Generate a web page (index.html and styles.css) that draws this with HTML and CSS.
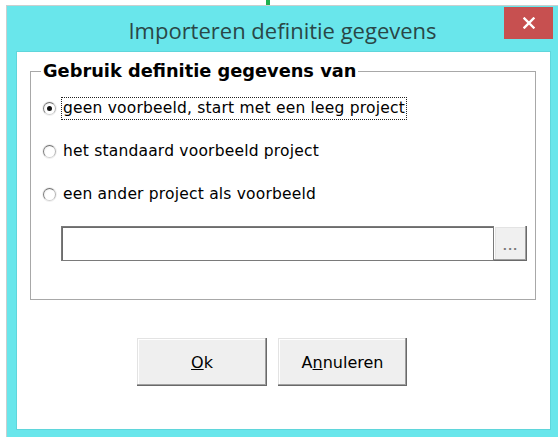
FILE: index.html
```html
<!DOCTYPE html>
<html lang="nl">
<head>
<meta charset="utf-8">
<title>Importeren definitie gegevens</title>
<link rel="stylesheet" href="styles.css">
</head>
<body>
<div class="desk"><span class="desk-mark"></span></div>
<div class="window">
  <div class="titlebar">
    <span class="title-spacer"></span>
    <h1 class="title">Importeren definitie gegevens</h1>
    <button class="close" type="button" aria-label="Sluiten">
      <svg width="12" height="12" viewBox="0 0 12 12"><path d="M1.5 1.5 L10.5 10.5 M10.5 1.5 L1.5 10.5" stroke="#fff" stroke-width="2.4" stroke-linecap="square" fill="none"/></svg>
    </button>
  </div>
  <div class="client">
    <fieldset class="group">
      <legend class="group-title">Gebruik definitie gegevens van</legend>
      <label class="option"><span class="radio checked"></span><span class="option-text focused">geen voorbeeld, start met een leeg project</span></label>
      <label class="option"><span class="radio"></span><span class="option-text">het standaard voorbeeld project</span></label>
      <label class="option"><span class="radio"></span><span class="option-text">een ander project als voorbeeld</span></label>
      <div class="picker">
        <div class="path"></div>
        <button class="browse" type="button">...</button>
      </div>
    </fieldset>
    <div class="actions">
      <button class="btn btn-ok" type="button"><u>O</u>k</button>
      <button class="btn btn-cancel" type="button">A<u>n</u>nuleren</button>
    </div>
  </div>
</div>
</body>
</html>
```
FILE: styles.css
```css
html, body {
  margin: 0;
  padding: 0;
  background: #fff;
  overflow: hidden;
}

body {
  width: 558px;
  height: 437px;
  font-family: "DejaVu Sans", Verdana, sans-serif;
  color: #000;
}

/* strip of desktop above the dialog */
.desk {
  height: 5px;
  padding-left: 266px;
}

.desk-mark {
  display: block;
  width: 4px;
  height: 5px;
  background: #1fb04e;
}

/* dialog frame */
.window {
  margin-left: 6px;
  width: 552px;
  height: 432px;
  background: #69e6eb;
  border-top: 1px solid #c9cfcf;
  border-left: 1px solid #c9cfcf;
  box-sizing: border-box;
}

.titlebar {
  height: 46px;
  display: grid;
  grid-template-columns: 1fr auto 1fr;
}

.title {
  margin: 10px 0 0 0;
  font-family: "Open Sans", "Noto Sans", sans-serif;
  font-weight: 400;
  font-size: 22px;
  line-height: 28px;
  color: #2a4747;
  white-space: nowrap;
}

.close {
  justify-self: end;
  align-self: start;
  width: 49px;
  height: 32px;
  margin: 1px 5px 0 0;
  padding: 0;
  border: 0;
  background: #c75050;
  display: flex;
  align-items: center;
  justify-content: center;
}

.client {
  margin: 0 8px 0 10px;
  height: 377px;
  box-sizing: border-box;
  background: #fff;
  padding: 9px 0 0 0;
  box-shadow: 0 0 0 1px #5fd6db;
}

/* group box */
.group {
  margin: 0 14px 0 13px;
  padding: 15px 8px 38px 12px;
  border: 1px solid #a8a8a8;
  display: flex;
  flex-direction: column;
  gap: 19px;
}

.group-title {
  padding: 0 2px;
  margin-left: -2px;
  font-weight: 700;
  font-size: 17.8px;
  line-height: 20px;
}

.option {
  display: flex;
  align-items: center;
  gap: 5px;
  height: 24px;
}

.radio {
  width: 11px;
  height: 11px;
  border-radius: 50%;
  border: 1px solid;
  border-color: #6f6f6f #b4b4b4 #d0d0d0 #7c7c7c;
  background: radial-gradient(circle at 60% 60%, #fff 50%, #e4e4e4 100%);
  box-shadow: 0 0 0 1px #f1f1f1;
  display: flex;
  align-items: center;
  justify-content: center;
  flex: none;
}

.radio.checked::after {
  content: "";
  width: 5px;
  height: 5px;
  border-radius: 50%;
  background: #111;
}

.option-text {
  font-size: 15.5px;
  letter-spacing: 0.2px;
  line-height: 21px;
  padding: 0 1px;
  border: 1px solid transparent;
  white-space: nowrap;
}

.option-text.focused {
  border: 1px dotted #222;
}

/* file chooser row */
.picker {
  display: flex;
  margin: 1px 0 0 18px;
  height: 35px;
}

.path {
  flex: 1;
  background: #fff;
  border: 1px solid #7a7a7a;
  box-shadow: inset 1px 1px 0 #6c6c6c;
}

.browse {
  width: 33px;
  height: 35px;
  padding: 6px 0 0 0;
  border: 0;
  background: #f0f0f0;
  color: #7a7a7a;
  font-family: "DejaVu Sans", sans-serif;
  font-size: 11px;
  font-weight: 700;
  letter-spacing: 1px;
  box-shadow: inset -1px -1px 0 #6a6a6a, inset -2px -2px 0 #a0a0a0, inset 1px 1px 0 #fff, inset 2px 2px 0 #e3e3e3;
}

/* dialog buttons */
.actions {
  display: flex;
  gap: 11px;
  padding: 38px 0 0 120px;
}

.btn {
  height: 48px;
  padding: 0;
  border: 0;
  background: #efefef;
  font-family: "DejaVu Sans", sans-serif;
  font-size: 16px;
  color: #000;
  box-shadow: inset -1px -1px 0 #696969, inset -2px -2px 0 #a0a0a0, inset 1px 1px 0 #e3e3e3, inset 2px 2px 0 #fff;
}

.btn-ok {
  width: 130px;
}

.btn-cancel {
  width: 129px;
}
```
